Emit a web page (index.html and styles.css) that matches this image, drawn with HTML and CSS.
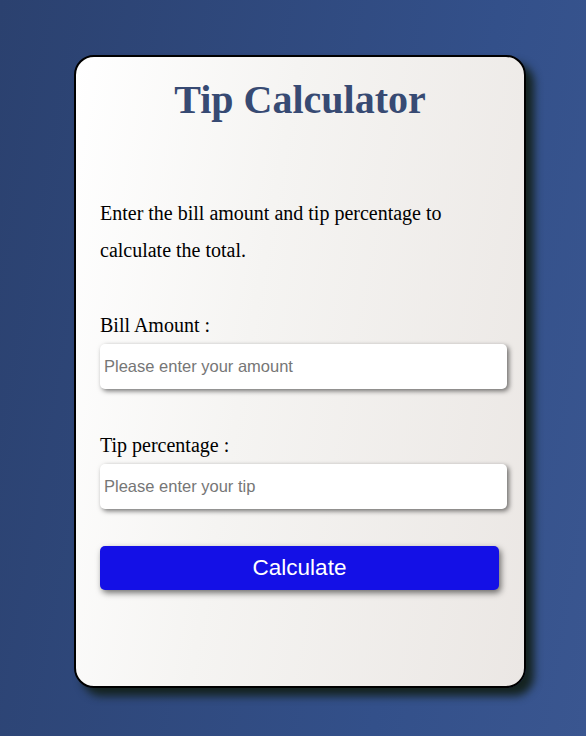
FILE: index.html
```html
<!DOCTYPE html>
<html lang="en">
<head>
<meta charset="utf-8">
<title>Tip Calculator</title>
<link rel="stylesheet" href="styles.css">
</head>
<body>
<div class="card">
  <h1 class="title">Tip Calculator</h1>
  <p class="intro">Enter the bill amount and tip percentage to calculate the total.</p>
  <label class="label" for="bill">Bill Amount :</label>
  <input class="field" id="bill" type="text" placeholder="Please enter your amount">
  <label class="label label-tip" for="tip">Tip percentage :</label>
  <input class="field" id="tip" type="text" placeholder="Please enter your tip">
  <button class="btn" type="button">Calculate</button>
</div>
</body>
</html>
```
FILE: styles.css
```css
html, body {
  margin: 0;
  height: 100%;
}
body {
  background: linear-gradient(100deg, #2b416f 0%, #33508a 70%, #3a5690 100%);
  padding: 55px 0 0 74px;
  box-sizing: border-box;
  font-family: "Liberation Serif", "Times New Roman", serif;
}
.card {
  width: 452px;
  height: 633px;
  box-sizing: border-box;
  border: 2px solid #000;
  border-radius: 20px;
  background: linear-gradient(100deg, #ffffff 0%, #f5f4f2 40%, #ebe7e4 100%);
  box-shadow: 8px 8px 8px #152320;
  padding: 0 24px;
  display: flex;
  flex-direction: column;
  align-items: flex-start;
}
.title {
  align-self: center;
  margin: 18px 0 0 0;
  font-size: 40px;
  font-weight: bold;
  color: #374a73;
  line-height: 50px;
  white-space: nowrap;
}
.intro {
  margin: 70px 0 0 0;
  font-size: 20px;
  line-height: 37px;
  color: #000;
  max-width: 402px;
}
.label {
  margin-top: 45px;
  font-size: 20px;
  line-height: 22px;
  color: #000;
}
.label-tip {
  margin-top: 45px;
}
.field {
  flex: none;
  margin-top: 8px;
  width: 407px;
  height: 45px;
  box-sizing: border-box;
  border: none;
  border-radius: 5px;
  background: #fff;
  box-shadow: 2px 2px 5px rgba(0,0,0,0.55);
  padding: 0 4px;
  font-family: "Liberation Sans", Arial, sans-serif;
  font-size: 16.5px;
  color: #000;
}
.field::placeholder {
  color: #767676;
}
.btn {
  margin-top: 37px;
  width: 399px;
  height: 44px;
  border: none;
  border-radius: 5px;
  background: #1410e6;
  color: #fff;
  font-family: "Liberation Sans", Arial, sans-serif;
  font-size: 22.5px;
  box-shadow: 2px 3px 6px rgba(0,0,0,0.55);
}
```
